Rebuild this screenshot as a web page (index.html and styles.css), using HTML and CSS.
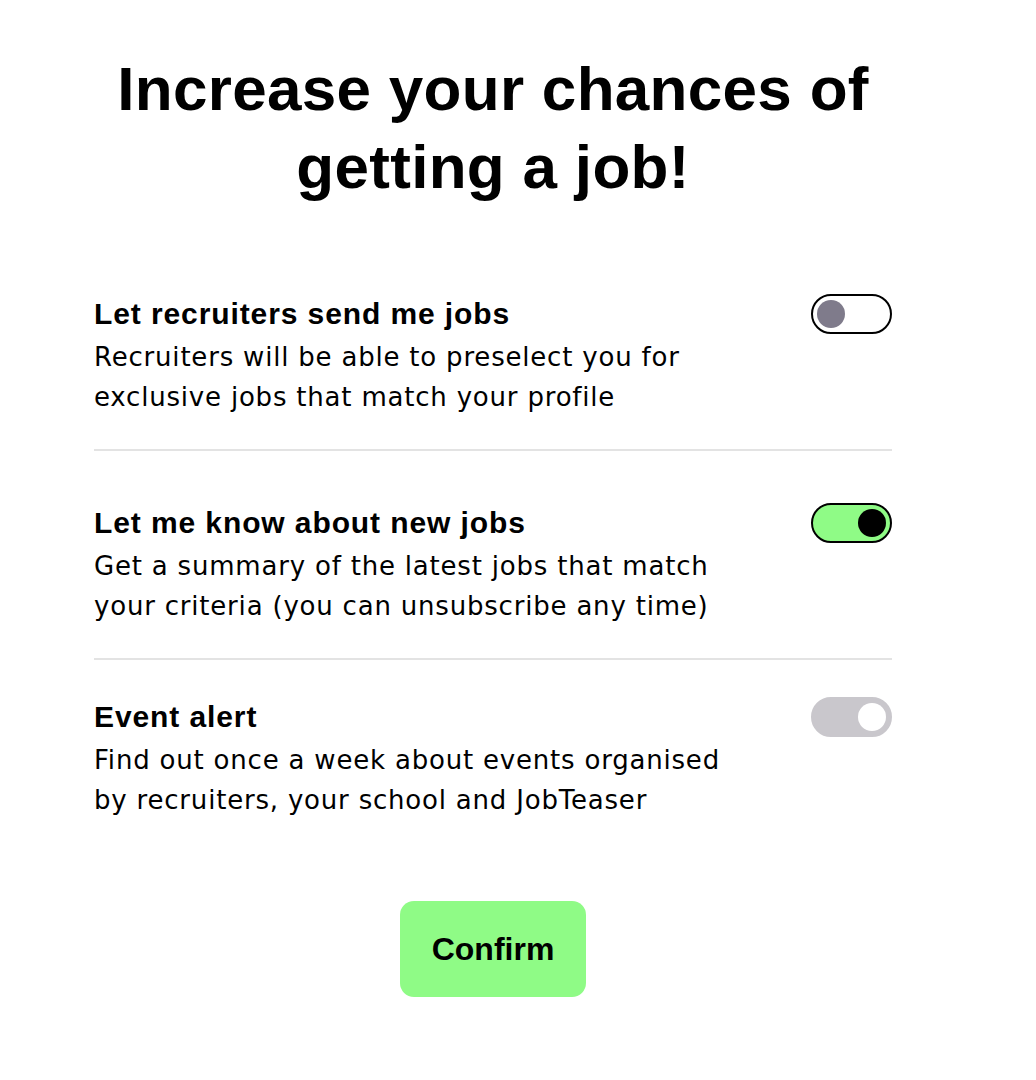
FILE: index.html
```html
<!DOCTYPE html>
<html lang="en">
<head>
<meta charset="utf-8">
<title>Job alerts</title>
<link rel="stylesheet" href="styles.css">
</head>
<body>
<main class="page">
  <h1 class="title">Increase your chances of getting a job!</h1>
  <section class="options">
    <div class="option option-first">
      <div class="option-text">
        <h2 class="option-title">Let recruiters send me jobs</h2>
        <p class="option-desc">Recruiters will be able to preselect you for exclusive jobs that match your profile</p>
      </div>
      <span class="toggle toggle-off" role="switch" aria-checked="false"><span class="knob"></span></span>
    </div>
    <div class="option option-second">
      <div class="option-text">
        <h2 class="option-title">Let me know about new jobs</h2>
        <p class="option-desc">Get a summary of the latest jobs that match your criteria (you can unsubscribe any time)</p>
      </div>
      <span class="toggle toggle-on" role="switch" aria-checked="true"><span class="knob"></span></span>
    </div>
    <div class="option option-last">
      <div class="option-text">
        <h2 class="option-title">Event alert</h2>
        <p class="option-desc">Find out once a week about events organised by recruiters, your school and JobTeaser</p>
      </div>
      <span class="toggle toggle-disabled" role="switch" aria-checked="true" aria-disabled="true"><span class="knob"></span></span>
    </div>
  </section>
  <div class="actions">
    <button class="confirm" type="button">Confirm</button>
  </div>
</main>
</body>
</html>
```
FILE: styles.css
```css
* { box-sizing: border-box; }
html, body { margin: 0; padding: 0; background: #fff; color: #000; }
body { font-family: "Liberation Sans", Arial, sans-serif; }

.page {
  width: 798px;
  margin-left: 94px;
  padding-top: 50px;
}

.title {
  margin: 0;
  padding: 0 20px;
  text-align: center;
  font-family: "Liberation Sans", Arial, sans-serif;
  font-weight: 700;
  font-size: 62px;
  line-height: 78px;
  letter-spacing: 0.3px;
}

.options { margin-top: 88px; }

.option {
  display: flex;
  justify-content: space-between;
  align-items: flex-start;
  border-bottom: 2px solid #e3e3e3;
  padding-bottom: 32px;
}
.option-second { padding-top: 52px; }
.option-last { padding-top: 37px; border-bottom: none; padding-bottom: 0; }

.option-text { width: 680px; }

.option-title {
  margin: 0 0 3px;
  font-size: 30px;
  line-height: 40px;
  font-weight: 700;
  letter-spacing: 0.9px;
}
.option-desc {
  margin: 0;
  font-family: "DejaVu Sans", sans-serif;
  font-size: 26px;
  line-height: 40px;
  letter-spacing: 0.8px;
  max-width: 645px;
}

.toggle {
  flex: none;
  position: relative;
  width: 81px;
  height: 40px;
  border-radius: 20px;
  border: 2px solid #000;
  display: flex;
  align-items: center;
  padding: 0 4px;
}
.knob {
  width: 28px;
  height: 28px;
  border-radius: 50%;
}
.toggle-off { background: #fff; }
.toggle-off .knob { background: #7f7b8b; }
.toggle-on { background: #8ffb86; justify-content: flex-end; }
.toggle-on .knob { background: #000; }
.toggle-disabled { background: #c9c7cc; border-color: #c9c7cc; justify-content: flex-end; }
.toggle-disabled .knob { background: #fff; }

.actions {
  display: flex;
  justify-content: center;
  margin-top: 81px;
}
.confirm {
  width: 186px;
  height: 96px;
  border: none;
  border-radius: 14px;
  background: #8ffb86;
  color: #000;
  font-family: "Liberation Sans", Arial, sans-serif;
  font-weight: 700;
  font-size: 32px;
  cursor: pointer;
}
```
